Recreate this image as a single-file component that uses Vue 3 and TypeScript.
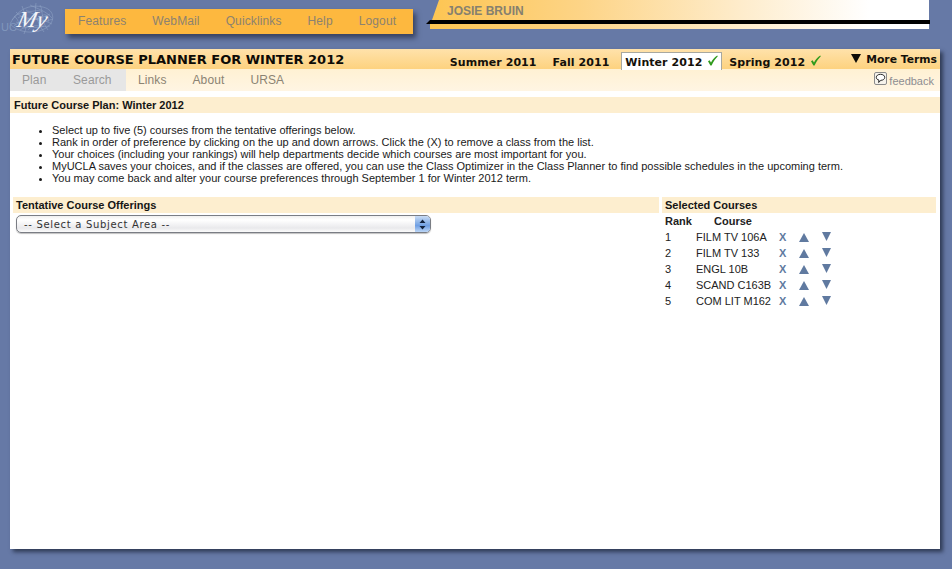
<script setup lang="ts">
interface Term { label: string; checked: boolean; active: boolean }
const menu: string[] = ['Features', 'WebMail', 'Quicklinks', 'Help', 'Logout']
const terms: Term[] = [
  { label: 'Summer 2011', checked: false, active: false },
  { label: 'Fall 2011', checked: false, active: false },
  { label: 'Winter 2012', checked: true, active: true },
  { label: 'Spring 2012', checked: true, active: false },
]
const subnav: string[] = ['Plan', 'Search', 'Links', 'About', 'URSA']
const notes: string[] = [
  'Select up to five (5) courses from the tentative offerings below.',
  'Rank in order of preference by clicking on the up and down arrows. Click the (X) to remove a class from the list.',
  'Your choices (including your rankings) will help departments decide which courses are most important for you.',
  'MyUCLA saves your choices, and if the classes are offered, you can use the Class Optimizer in the Class Planner to find possible schedules in the upcoming term.',
  'You may come back and alter your course preferences through September 1 for Winter 2012 term.',
]
const courses: string[] = ['FILM TV 106A', 'FILM TV 133', 'ENGL 10B', 'SCAND C163B', 'COM LIT M162']
</script>

<template>
  <div class="page">
    <header class="top">
      <svg class="logo" width="56" height="40" viewBox="0 0 56 40" aria-hidden="true">
        <g fill="none" stroke="#a9bcd8" stroke-width="0.5" opacity="0.7">
          <path d="M10 24C18 8 32 3 46 8C55 12 55 22 46 28C36 34 20 34 10 24Z" />
          <path d="M16 12C24 20 34 22 50 14M14 26C24 18 36 16 52 24M22 6C26 16 28 26 24 34M36 3C34 14 38 24 44 32" />
          <path d="M18 18C26 12 32 26 42 16C46 12 50 18 48 22M20 30C28 24 34 30 44 26" />
          <path d="M26 10C30 14 38 8 42 12M14 16C20 20 18 28 26 28M30 5C38 9 46 11 52 18M12 20C18 12 24 10 34 14" />
          <path d="M16 22C24 26 30 16 38 20C44 24 48 20 53 19M28 30C34 22 40 28 50 26M40 5C44 12 40 20 48 30" />
        </g>
        <text x="1" y="31" class="logo-ucla">UC</text>
        <text x="0" y="0" class="logo-my" transform="translate(16 27) skewX(-14)">My</text>
      </svg>
      <nav class="menu">
        <a v-for="item in menu" :key="item" class="menu-item">{{ item }}</a>
      </nav>
      <div class="banner">
        <div class="banner-fill">
          <span class="banner-name">JOSIE BRUIN</span>
        </div>
        <div class="banner-rule"></div>
      </div>
    </header>

    <main class="card">
      <div class="titlebar">
        <h1 class="title">FUTURE COURSE PLANNER FOR WINTER 2012</h1>
        <div class="terms">
          <span v-for="t in terms" :key="t.label" class="term" :class="{ 'term-active': t.active }">
            {{ t.label }}<svg v-if="t.checked" class="check" width="11" height="11" viewBox="0 0 11 11" aria-hidden="true">
              <path d="M1 6.2L2.6 5.2L4 7.6C5.4 4.8 7.4 2.4 10.2 0.6L10.8 1.2C8.4 3.6 6.4 6.6 4.6 10.6H3.4Z" fill="#2f9a1c" />
            </svg>
          </span>
          <span class="more"><span class="more-arrow"></span>More Terms</span>
        </div>
      </div>
      <div class="subbar">
        <nav class="subnav">
          <a v-for="s in subnav" :key="s" class="subnav-item" :class="{
            'subnav-grey': s === 'Plan' || s === 'Search',
          }">{{ s }}</a>
        </nav>
        <a class="feedback">
          <svg class="bubble" width="13" height="13" viewBox="0 0 13 13" aria-hidden="true">
            <rect x="0.5" y="0.5" width="12" height="12" rx="1.5" fill="#f6f3ec" stroke="#8b8b8b" />
            <path d="M6.5 2.3C9 2.3 10.7 3.6 10.7 5.4C10.7 7.2 8.9 8.3 6.9 8.3L4.6 10.5L5 8.1C3.3 7.7 2.3 6.7 2.3 5.4C2.3 3.6 4 2.3 6.5 2.3Z" fill="#fff" stroke="#111" stroke-width="0.9" />
          </svg>
          feedback
        </a>
      </div>

      <h2 class="plan-heading">Future Course Plan: Winter 2012</h2>
      <ul class="notes">
        <li v-for="n in notes" :key="n">{{ n }}</li>
      </ul>

      <div class="columns">
        <section class="offerings">
          <h3 class="section-heading">Tentative Course Offerings</h3>
          <div class="select">
            <span class="select-label">-- Select a Subject Area --</span>
            <span class="select-button">
              <svg width="7" height="11" viewBox="0 0 7 11" aria-hidden="true">
                <path d="M3.5 0.5L6.5 4H0.5Z M3.5 10.5L0.5 7H6.5Z" fill="#12233f" />
              </svg>
            </span>
          </div>
        </section>
        <section class="selected">
          <h3 class="section-heading">Selected Courses</h3>
          <div class="table-head">
            <span class="th-rank">Rank</span>
            <span>Course</span>
          </div>
          <div v-for="(c, i) in courses" :key="c" class="row">
            <span class="cell-rank">{{ i + 1 }}</span>
            <span class="cell-course">{{ c }}</span>
            <span class="cell-x">X</span>
            <svg class="arrow-up" width="10" height="9" viewBox="0 0 10 9" aria-hidden="true">
              <path d="M5 0L10 9H0Z" fill="#607aa0" />
            </svg>
            <svg class="arrow-down" width="9" height="9" viewBox="0 0 9 9" aria-hidden="true">
              <path d="M0 0H9L4.5 9Z" fill="#607aa0" />
            </svg>
          </div>
        </section>
      </div>
    </main>
  </div>
</template>

<style>
html, body { margin: 0; background: #6679a6; }
</style>

<style scoped>
.page {
  width: 952px;
  height: 569px;
  overflow: hidden;
  background: #6679a6;
  font-family: "Liberation Sans", Arial, sans-serif;
}
.top {
  display: flex;
  align-items: flex-start;
  height: 49px;
}
.logo { flex: none; width: 56px; height: 40px; margin-right: 9px; overflow: hidden; }
.logo-my { font-family: "Liberation Serif", serif; font-style: italic; font-size: 23px; fill: #f4f6fa; }
.logo-ucla { font-family: "Liberation Sans", sans-serif; font-size: 11px; fill: #8197bd; }
.menu {
  display: flex;
  align-items: center;
  gap: 26px;
  box-sizing: border-box;
  width: 348px;
  height: 25px;
  margin-top: 9px;
  padding: 0 0 1px 13px;
  background: #fdb83f;
  box-shadow: 3px 4px 5px rgba(40, 50, 75, 0.75);
}
.menu-item { font-size: 12px; letter-spacing: 0.12px; color: #8c8270; }
.banner {
  position: relative;
  width: 504px;
  height: 29px;
  margin-left: 13px;
}
.banner-fill {
  box-sizing: border-box;
  width: 499px;
  height: 29px;
  margin-left: 4px;
  padding: 4px 0 0 17px;
  background: linear-gradient(90deg, #fdc552 0%, #fdd486 30%, #feeccb 62%, #ffffff 88%);
  clip-path: polygon(9px 0, 100% 0, 100% 100%, 0 100%, 0 24px, 2px 20px);
}
.banner-name {
  display: block;
  font-size: 12px;
  font-weight: bold;
  line-height: 14px;
  color: #85806f;
}
.banner-rule {
  position: absolute;
  left: 0;
  right: 0;
  top: 20px;
  height: 4px;
  background: #000;
  clip-path: polygon(4px 0, 100% 0, 100% 100%, 0 100%);
}
.card {
  box-sizing: border-box;
  width: 930px;
  height: 500px;
  margin-left: 10px;
  background: #fff;
  box-shadow: 3px 3px 4px rgba(38, 48, 72, 0.85);
}
.titlebar {
  display: flex;
  justify-content: space-between;
  height: 20px;
  background: linear-gradient(180deg, #ffe2ab 0%, #fdd27f 100%);
}
.title {
  margin: 0;
  padding-left: 2px;
  font-family: "DejaVu Sans", Verdana, sans-serif;
  font-size: 13px;
  font-weight: bold;
  line-height: 21px;
  color: #0d0b06;
  white-space: nowrap;
}
.terms {
  display: flex;
  align-items: flex-end;
  height: 20px;
  font-family: "DejaVu Sans", Verdana, sans-serif;
  font-size: 11px;
  font-weight: bold;
  letter-spacing: 0.06px;
  color: #14100a;
  white-space: nowrap;
}
.term { margin-right: 16px; line-height: 22px; height: 17px; }
.term:nth-child(2) { margin-right: 12px; }
.term-active {
  box-sizing: border-box;
  width: 101px;
  height: 18px;
  margin-bottom: -1px;
  padding-left: 3px;
  margin-right: 7px;
  line-height: 20px;
  border: 1px solid #a8a8a0;
  border-bottom: 0;
  background: #fff;
}
.term:nth-child(4) { margin-right: 0; }
.check { margin-left: 5px; vertical-align: 0; }
.more {
  display: flex;
  align-items: center;
  height: 20px;
  margin-left: 30px;
  padding: 1px 3px 0 0;
  box-sizing: border-box;
  font-size: 10.8px;
  letter-spacing: 0;
  line-height: 20px;
  align-self: flex-start;
}
.more-arrow {
  width: 0;
  height: 0;
  margin-right: 5px;
  border-left: 5px solid transparent;
  border-right: 5px solid transparent;
  border-top: 9px solid #0d0b06;
  margin-top: -3px;
}
.subbar {
  display: flex;
  justify-content: space-between;
  height: 22px;
  background: linear-gradient(180deg, #fff1d3 0%, #fff5e3 100%);
}
.subnav { display: flex; height: 22px; }
.subnav-item {
  box-sizing: border-box;
  height: 22px;
  padding: 4px 0 0;
  font-size: 12px;
  line-height: 14px;
  letter-spacing: 0.1px;
  color: #8b8373;
  margin-right: 26px;
}
.subnav-item:nth-child(1) { padding-left: 12px; margin-right: 0; width: 52px; }
.subnav-item:nth-child(2) { padding-left: 11px; margin-right: 12px; width: 64px; }
.subnav-grey { background: #e6e6e6; color: #9a9a9a; }
.feedback {
  display: flex;
  align-items: flex-start;
  gap: 2px;
  padding: 3px 6px 0 0;
  font-size: 11px;
  line-height: 18px;
  color: #8d8d92;
}
.plan-heading {
  margin: 6px 0 0;
  height: 16px;
  padding-left: 4px;
  font-size: 11px;
  font-weight: bold;
  line-height: 16px;
  color: #151515;
  background: #fdeecf;
}
.notes {
  margin: 0;
  height: 84px;
  box-sizing: border-box;
  padding: 11px 0 0 42px;
  font-size: 11px;
  line-height: 12px;
  color: #1a1a1a;
}
.columns { display: flex; padding: 0 4px 0 3px; }
.offerings { width: 646px; margin-right: 3px; }
.selected { width: 274px; }
.section-heading {
  margin: 0;
  height: 16px;
  padding-left: 3px;
  font-size: 11px;
  font-weight: bold;
  line-height: 16px;
  color: #151515;
  background: #fdeecf;
}
.select {
  position: relative;
  box-sizing: border-box;
  display: flex;
  align-items: center;
  width: 415px;
  height: 18px;
  margin-top: 2px;
  margin-left: 3px;
  padding-left: 7px;
  border: 1px solid #7a7d84;
  border-radius: 5px;
  background: linear-gradient(180deg, #f0f0f0 0%, #fff 25%, #e9e9ec 75%, #fbfbfb 100%);
  box-shadow: 0 1px 1px rgba(0, 0, 0, 0.25);
  overflow: hidden;
}
.select-label {
  font-family: "DejaVu Sans", sans-serif;
  font-size: 10px;
  letter-spacing: 0.68px;
  color: #333;
}
.select-button {
  position: absolute;
  right: 0;
  top: 0;
  bottom: 0;
  display: flex;
  align-items: center;
  justify-content: center;
  width: 15px;
  background: linear-gradient(180deg, #c9dcf5 0%, #7eaae6 50%, #6f9fe4 60%, #bcd6f6 100%);
}
.table-head {
  display: flex;
  height: 16px;
  padding-left: 3px;
  font-size: 11px;
  font-weight: bold;
  line-height: 17px;
  color: #222;
}
.th-rank { width: 49px; }
.row {
  display: flex;
  align-items: center;
  height: 16px;
  padding-left: 3px;
  font-size: 11px;
  color: #222;
}
.cell-rank { width: 31px; }
.cell-course { width: 83px; white-space: nowrap; }
.cell-x { width: 20px; font-weight: bold; font-size: 11px; color: #607aa0; }
.arrow-up { margin-top: 1px; }
.arrow-down { margin-left: 13px; margin-top: -1px; }
</style>
